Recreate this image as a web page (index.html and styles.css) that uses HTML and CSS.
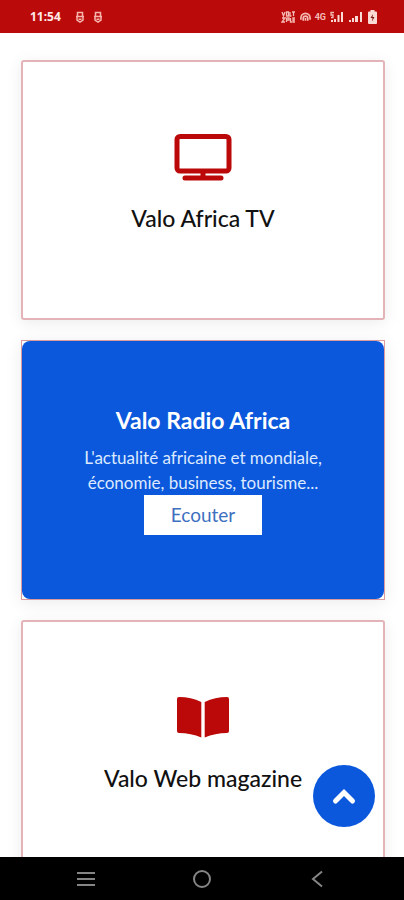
FILE: index.html
```html
<!DOCTYPE html>
<html lang="fr">
<head>
<meta charset="utf-8">
<meta name="viewport" content="width=device-width, initial-scale=1">
<title>Valo Africa</title>
<link rel="stylesheet" href="styles.css">
</head>
<body>
<div class="screen">
  <header class="status">
    <div class="status-left">
      <time class="clock">11:54</time>
      <svg class="shield" viewBox="0 0 10 12" aria-hidden="true"><path d="M2.500 5V1.500h5V5M1 5.500h8M2 5.500V9l3 2 3-2V5.500M3.500 8.300h3"/></svg>
      <svg class="shield" viewBox="0 0 10 12" aria-hidden="true"><path d="M2.500 5V1.500h5V5M1 5.500h8M2 5.500V9l3 2 3-2V5.500M3.500 8.300h3"/></svg>
    </div>
    <div class="status-right">
      <svg width="15" height="12" viewBox="0 0 15 12" aria-hidden="true"><path class="line heavy" d="M1 1l1.500 4L4 1M5.500 1h2v4h-2zM9 1v4h1.500M11 1h3M12.500 1v4M1 7h3l-3 4h3M5.500 7v4M5.500 7h2.500v2H5.500M9.500 7v4H11M14 7h-2v4h2M12 9h2"/></svg>
      <svg width="11" height="12" viewBox="0 0 12 12" aria-hidden="true"><path class="line thick" d="M1 9V7a5 5 0 0 1 10 0v2M3.500 10V7.500a2.500 2.500 0 0 1 5 0V10M6 7v3"/></svg>
      <span class="network">4G</span>
      <svg width="13" height="12" viewBox="0 0 13 12" aria-hidden="true"><path class="line heavy" d="M4 1.500H1V4h2v2.500H1"/><path class="solid" d="M1 9h2v2H1zM4 8h2v3H4zM7.500 4h2v7h-2zM11 1h2v10h-2z"/></svg>
      <svg class="signal" width="13" height="12" viewBox="0 0 13 12" aria-hidden="true"><path class="solid" d="M0 9h2v2H0zM3 7h2v4H3zM6 5h3v6H6zM11 1h2v10h-2z"/></svg>
      <svg width="9" height="14" viewBox="0 0 9 14" aria-hidden="true"><path class="solid" d="M2.500 0h4v1.500H8q1 0 1 1V13q0 1-1 1H1q-1 0-1-1V2.500q0-1 1-1h1.500z"/><path class="bolt" d="M5 4L2.500 8h2L4 11.500 6.500 7h-2z"/></svg>
    </div>
  </header>

  <main class="content">
    <article class="card">
      <svg class="icon" viewBox="0 0 58 48" aria-hidden="true"><path class="tv" d="M6 2.500h46a3 3 0 0 1 3 3v28.500a3 3 0 0 1-3 3H6a3 3 0 0 1-3-3V5.500a3 3 0 0 1 3-3zM29 37v6M11 44h36"/></svg>
      <h2 class="title">Valo Africa TV</h2>
    </article>

    <article class="card-frame">
      <div class="card-active">
        <h2 class="title strong">Valo Radio Africa</h2>
        <p class="text">L'actualité africaine et mondiale, économie, business, tourisme...</p>
        <button class="listen" type="button">Ecouter</button>
      </div>
    </article>

    <article class="card">
      <svg class="icon" viewBox="0 0 58 48" aria-hidden="true"><path class="book" d="M5 3Q17 3 27.300 8V43.500Q17 39 5 39Q3 39 3 37V5Q3 3 5 3zM53 3Q41 3 30.700 8V43.500Q41 39 53 39Q55 39 55 37V5Q55 3 53 3z"/></svg>
      <h2 class="title">Valo Web magazine</h2>
    </article>
  </main>

  <a class="to-top" href="#" aria-label="Haut de page">
    <svg width="26" height="18" viewBox="0 0 26 18" aria-hidden="true"><path d="M4.500 14L13 5.500l8.500 8.500"/></svg>
  </a>

  <nav class="system-nav" aria-label="Navigation">
    <button type="button" aria-label="Applications récentes"><svg width="20" height="20" viewBox="0 0 20 20"><path d="M1 4h18M1 10h18M1 16h18"/></svg></button>
    <button type="button" aria-label="Accueil"><svg width="20" height="20" viewBox="0 0 20 20"><circle cx="10" cy="10" r="8"/></svg></button>
    <button type="button" aria-label="Retour"><svg width="20" height="20" viewBox="0 0 20 20"><path d="M14 2.500L5 10l9 7.500"/></svg></button>
  </nav>
</div>
</body>
</html>
```
FILE: styles.css
```css
* {
  box-sizing: border-box;
}

body {
  margin: 0;
  background: #fff;
  color: #111;
  font-family: Lato, "Liberation Sans", sans-serif;
}

.screen {
  display: flex;
  flex-direction: column;
  height: 100vh;
  overflow: hidden;
}

.status {
  display: flex;
  flex: none;
  align-items: center;
  justify-content: space-between;
  padding: 10px 27px 9px 30px;
  height: 33px;
  background: #bb0a0a;
  color: #ffe9e6;
}

.status-left,
.status-right {
  display: flex;
  align-items: center;
}

.status-right {
  gap: 4px;
}

.clock {
  margin-right: 14px;
  font: 700 12px/14px "Noto Sans", sans-serif;
}

.shield {
  width: 10px;
  height: 12px;
  margin-right: 8px;
  fill: none;
  stroke: #f6b5ad;
  stroke-width: 1.5;
}

.network {
  font: 700 9px/12px Roboto, sans-serif;
  color: #f5bcb5;
}

.line {
  fill: none;
  stroke: #f5bcb5;
}

.heavy {
  stroke-width: 1.3;
}

.thick {
  stroke-width: 1.8;
}

.solid {
  fill: #fbd9d4;
}

.signal {
  margin: 0 2px;
}

.bolt {
  fill: #7d1712;
}

.content {
  display: flex;
  flex: 1;
  flex-direction: column;
  gap: 20px;
  min-height: 0;
  padding: 27px 19px 0 21px;
  overflow: hidden;
}

.card,
.card-frame {
  flex: none;
  height: 260px;
  border: 1px solid #dd9a9d;
  box-shadow: 0 3px 16px rgba(0, 0, 0, 0.08);
}

.card {
  display: flex;
  flex-direction: column;
  align-items: center;
  padding-top: 72px;
  border-width: 2px;
  border-color: #e3b3b8;
  border-radius: 3px;
  background: #fff;
}

.card-active {
  display: flex;
  flex-direction: column;
  align-items: center;
  height: 100%;
  padding: 65px 50px 0;
  border-radius: 8px;
  background: #0b58dc;
  color: #fff;
}

.icon {
  width: 58px;
  height: 48px;
  margin-bottom: 22px;
}

.tv {
  fill: none;
  stroke: #bb0808;
  stroke-width: 5;
  stroke-linecap: round;
}

.book {
  fill: #bb0808;
}

.title {
  margin: 0;
  font-size: 23px;
  font-weight: 500;
  line-height: 28px;
  text-align: center;
}

.strong {
  font-weight: 700;
}

.text {
  margin: 11px 0 0;
  color: #dce9ff;
  font-size: 17px;
  line-height: 25px;
  text-align: center;
}

.listen {
  width: 118px;
  height: 40px;
  padding: 0;
  border: 0;
  background: #fff;
  color: #3d70c0;
  font: 400 19px/38px Lato, "Liberation Sans", sans-serif;
}

.to-top {
  position: fixed;
  right: 29px;
  bottom: 73px;
  display: flex;
  align-items: center;
  justify-content: center;
  width: 62px;
  height: 62px;
  border-radius: 50%;
  background: #0b58dc;
}

.to-top path {
  fill: none;
  stroke: #fff;
  stroke-width: 5;
  stroke-linecap: round;
}

.system-nav {
  display: flex;
  flex: none;
  align-items: center;
  justify-content: space-between;
  height: 43px;
  padding: 0 76px;
  background: #000;
}

.system-nav button {
  display: flex;
  padding: 0;
  border: 0;
  background: none;
}

.system-nav svg {
  fill: none;
  stroke: #858585;
  stroke-width: 2;
}
```
